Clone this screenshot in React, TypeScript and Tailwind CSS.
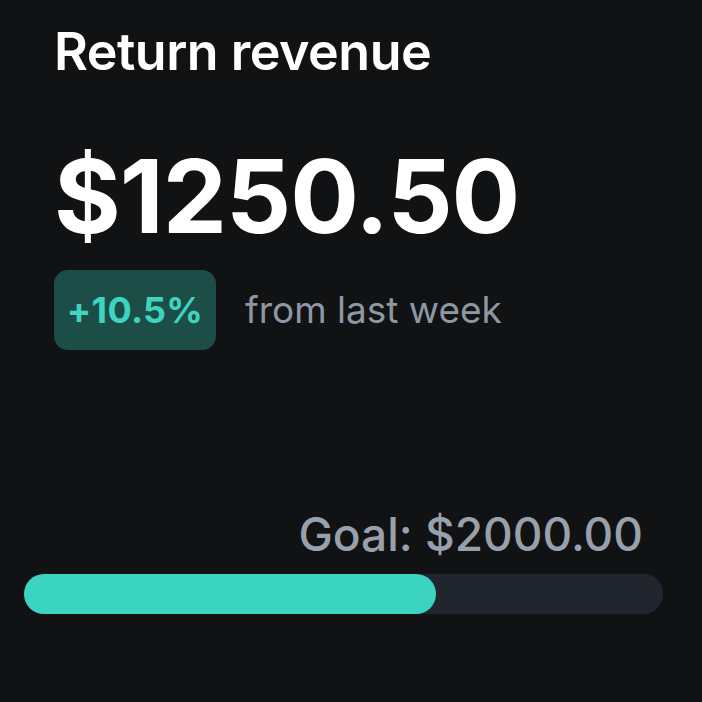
export default function App() {
  const goal = 2000;
  const current = 1250.5;

  return (
    <div className="flex h-[702px] w-[702px] flex-col bg-[#111214] font-['Inter','Lato',sans-serif]">
      <div className="flex flex-col pl-[54px] pt-[22px]">
        <h1 className="text-[52px] font-semibold leading-[60px] tracking-[-0.5px] text-white">Return revenue</h1>
        <p className="mt-[62px] text-[102px] font-bold leading-[104px] tracking-[-1px] text-white">$1250.50</p>
        <div className="mt-[22px] flex items-center gap-[29px]">
          <span className="flex h-[80px] w-[162px] items-center justify-center rounded-[14px] bg-[#1d4d47] text-[36px] font-bold tracking-[0.3px] text-[#3dd5c0]">
            +10.5%
          </span>
          <span className="text-[37px] font-normal text-[#8e98a3]">from last week</span>
        </div>
      </div>

      <div className="mt-auto flex flex-col pb-[88px] pl-[24px] pr-[39px]">
        <p className="mr-[20px] self-end text-[46px] font-medium leading-[56px] text-[#98a1ab]">Goal: $2000.00</p>
        <div className="mt-[12px] h-[40px] w-full rounded-full bg-[#21262e]">
          <div
            className="h-full rounded-full bg-[#3ad4c0]"
            style={{ width: `${(current / goal) * 100 + 2}%` }}
          />
        </div>
      </div>
    </div>
  );
}
